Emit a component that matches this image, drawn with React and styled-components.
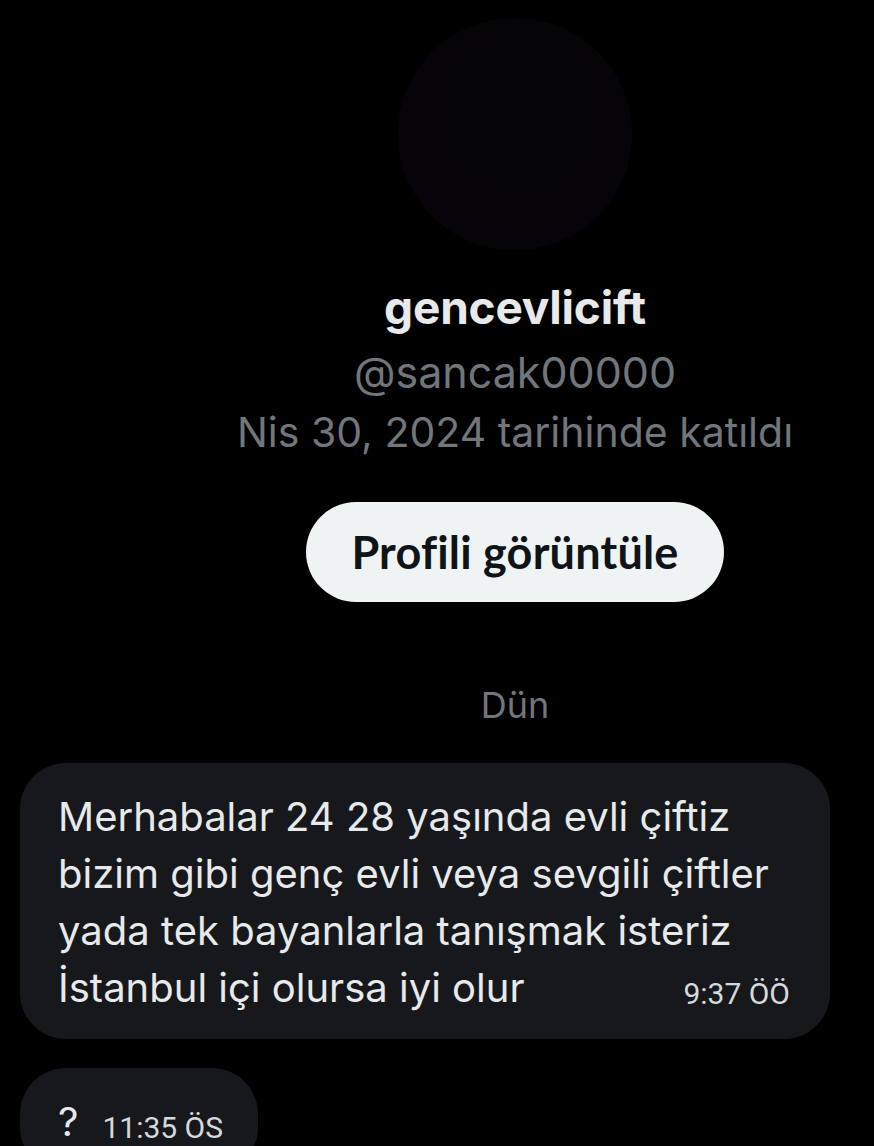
import React from "react";
import styled, { createGlobalStyle } from "styled-components";

const Global = createGlobalStyle`
  html, body { margin: 0; padding: 0; background: #000; }
  body { font-family: Inter, "Noto Sans", sans-serif; -webkit-font-smoothing: antialiased; }
`;

const Page = styled.div`
  background: #000;
  min-height: 1146px;
  overflow: hidden;
  display: flex;
  flex-direction: column;
`;

const Header = styled.section`
  display: flex;
  flex-direction: column;
  align-items: center;
  padding-left: 156px;
  padding-top: 18px;
`;

const Avatar = styled.div`
  width: 234px;
  height: 232px;
  border-radius: 50%;
  background: radial-gradient(circle at 50% 40%, #050406 0%, #060408 70%, #08060b 100%);
`;

const Name = styled.div`
  margin-top: 27px;
  font-family: Inter, sans-serif;
  font-weight: 700;
  font-size: 46px;
  line-height: 60px;
  color: #e7e9ea;
  letter-spacing: -0.2px;
`;

const Meta = styled.div`
  font-family: Inter, sans-serif;
  font-size: ${(p) => p.$size}px;
  line-height: 60px;
  color: #71767b;
  margin-top: ${(p) => p.$mt || 0}px;
`;

const ProfileButton = styled.button`
  margin-top: 40px;
  width: 418px;
  height: 100px;
  border: none;
  border-radius: 50px;
  background: #eff3f4;
  color: #0f1419;
  font-family: Lato, sans-serif;
  font-weight: 700;
  font-size: 45px;
  font-variant-ligatures: none;
  letter-spacing: 0.2px;
  display: flex;
  align-items: center;
  justify-content: center;
  padding: 0;
`;

const DayLabel = styled.div`
  margin-top: 83px;
  font-family: Inter, sans-serif;
  font-size: 36px;
  line-height: 40px;
  color: #71767b;
`;

const Messages = styled.section`
  display: flex;
  flex-direction: column;
  align-items: flex-start;
  gap: 29px;
  padding: 38px 20px 0;
`;

const Bubble = styled.div`
  box-sizing: border-box;
  width: ${(p) => p.$width}px;
  background: #16181c;
  border-radius: 46px;
  padding: 25px 40px 23px 38px;
  color: #e7e9ea;
  font-family: Inter, sans-serif;
  font-size: 40px;
  line-height: 57px;
`;

const Line = styled.div`
  white-space: nowrap;
  height: 57px;
`;

const LastLine = styled.div`
  display: flex;
  align-items: center;
  height: 57px;
  justify-content: ${(p) => (p.$tight ? "flex-start" : "space-between")};
  gap: ${(p) => (p.$tight ? "24px" : "0")};
  white-space: nowrap;
`;

const Time = styled.span`
  font-family: Roboto, sans-serif;
  font-size: 30px;
  line-height: 40px;
  color: #d6d9db;
  position: relative;
  top: 6px;
`;

export default function App() {
  return (
    <Page>
      <Global />
      <Header>
        <Avatar />
        <Name>gencevlicift</Name>
        <Meta $mt={5} $size={43}>@sancak00000</Meta>
        <Meta $size={41}>Nis 30, 2024 tarihinde katıldı</Meta>
        <ProfileButton>Profili görüntüle</ProfileButton>
        <DayLabel>Dün</DayLabel>
      </Header>
      <Messages>
        <Bubble $width={810}>
          <Line>Merhabalar 24 28 yaşında evli çiftiz</Line>
          <Line>bizim gibi genç evli veya sevgili çiftler</Line>
          <Line>yada tek bayanlarla tanışmak isteriz</Line>
          <LastLine>
            <span>İstanbul içi olursa iyi olur</span>
            <Time>9:37 ÖÖ</Time>
          </LastLine>
        </Bubble>
        <Bubble $width={238}>
          <LastLine $tight>
            <span>?</span>
            <Time>11:35 ÖS</Time>
          </LastLine>
        </Bubble>
      </Messages>
    </Page>
  );
}
